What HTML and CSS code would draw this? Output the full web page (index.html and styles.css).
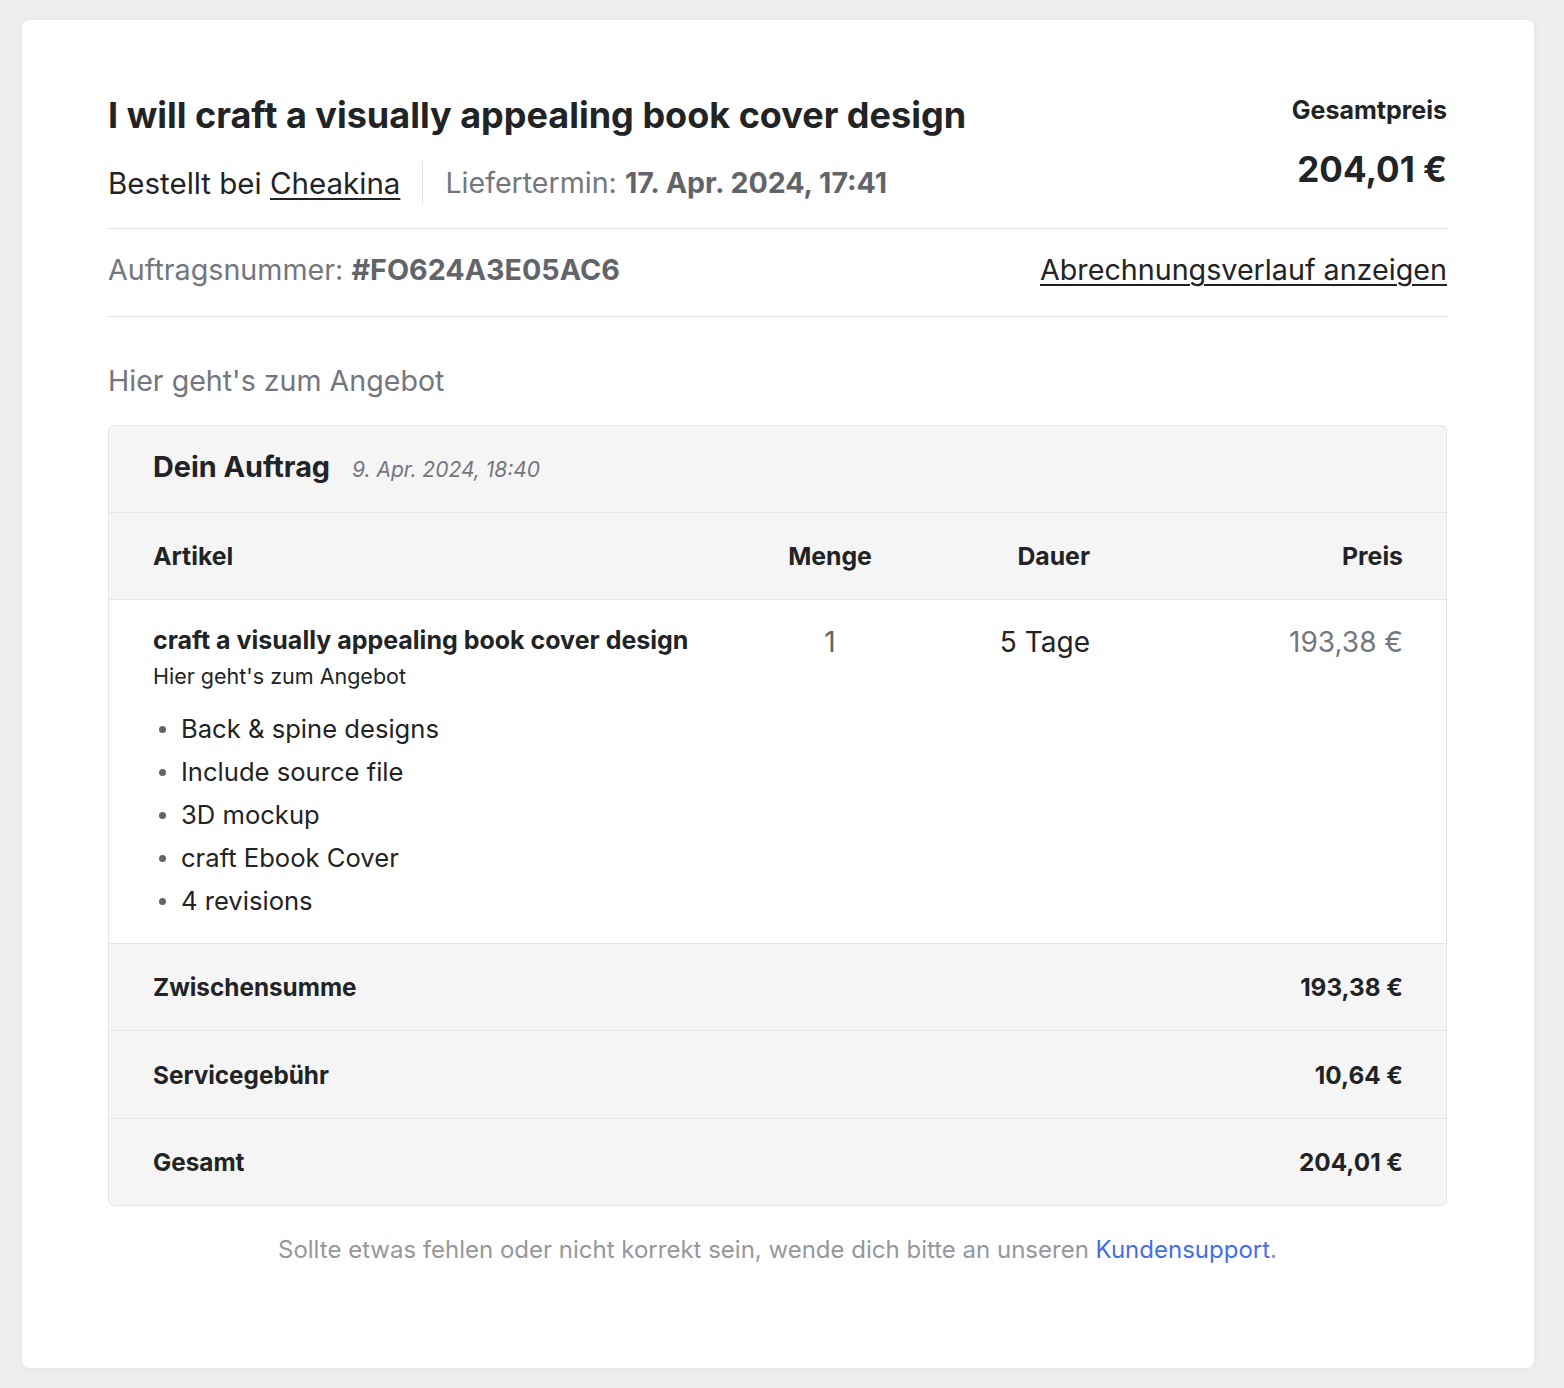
FILE: index.html
```html
<!DOCTYPE html>
<html lang="de">
<head>
<meta charset="utf-8">
<title>Auftrag</title>
<link rel="stylesheet" href="styles.css">
</head>
<body>
<main class="card">
  <header class="order-head">
    <div class="head-main">
      <h1 class="gig-title">I will craft a visually appealing book cover design</h1>
      <div class="meta">
        <span class="meta-seller">Bestellt bei <a class="seller-link" href="#">Cheakina</a></span>
        <span class="meta-sep"></span>
        <span class="meta-delivery">Liefertermin: <strong>17. Apr. 2024, 17:41</strong></span>
      </div>
    </div>
    <div class="head-total">
      <div class="total-label">Gesamtpreis</div>
      <div class="total-value">204,01 €</div>
    </div>
  </header>

  <div class="order-number-row">
    <span class="order-number">Auftragsnummer: <strong>#FO624A3E05AC6</strong></span>
    <a class="billing-link" href="#">Abrechnungsverlauf anzeigen</a>
  </div>

  <p class="offer-link">Hier geht's zum Angebot</p>

  <section class="order-box">
    <div class="box-head">
      <h2 class="box-title">Dein Auftrag</h2>
      <span class="box-date">9. Apr. 2024, 18:40</span>
    </div>

    <div class="grid-row col-head">
      <span>Artikel</span>
      <span class="c-center">Menge</span>
      <span class="c-right">Dauer</span>
      <span class="c-right">Preis</span>
    </div>

    <div class="grid-row item-row">
      <div class="item-info">
        <div class="item-title">craft a visually appealing book cover design</div>
        <div class="item-sub">Hier geht's zum Angebot</div>
        <ul class="item-features">
          <li>Back &amp; spine designs</li>
          <li>Include source file</li>
          <li>3D mockup</li>
          <li>craft Ebook Cover</li>
          <li>4 revisions</li>
        </ul>
      </div>
      <span class="item-val c-center qty">1</span>
      <span class="item-val c-right dur">5 Tage</span>
      <span class="item-val c-right price">193,38 €</span>
    </div>

    <div class="sum-row">
      <span>Zwischensumme</span>
      <span>193,38 €</span>
    </div>
    <div class="sum-row sum-row-mid">
      <span>Servicegebühr</span>
      <span>10,64 €</span>
    </div>
    <div class="sum-row">
      <span>Gesamt</span>
      <span>204,01 €</span>
    </div>
  </section>

  <p class="footnote">Sollte etwas fehlen oder nicht korrekt sein, wende dich bitte an unseren <a class="support-link" href="#">Kundensupport</a>.</p>
</main>
</body>
</html>
```

FILE: styles.css
```css
* { box-sizing: border-box; }

html, body {
  margin: 0;
  background: #efefef;
}

body {
  padding: 20px 22px;
  font-family: "Inter", "Noto Sans", sans-serif;
  color: #222325;
}

a { color: inherit; }

.card {
  width: 1512px;
  background: #ffffff;
  border-radius: 8px;
  box-shadow: 0 1px 14px rgba(0, 0, 0, 0.05);
  padding: 73px 87px 102px 86px;
}

/* ---------- head ---------- */
.order-head {
  display: flex;
  justify-content: space-between;
  align-items: flex-start;
  padding-bottom: 23px;
  border-bottom: 1px solid #e4e5e7;
}

.gig-title {
  margin: 0;
  font-size: 36px;
  line-height: 44px;
  font-weight: 700;
  color: #222325;
}

.meta {
  display: flex;
  align-items: stretch;
  gap: 22px;
  margin-top: 24px;
  line-height: 44px;
}

.meta-seller {
  font-size: 29.5px;
  color: #222325;
}

.seller-link {
  text-decoration: underline;
  text-underline-offset: 4px;
  text-decoration-thickness: 2px;
}

.meta-sep {
  width: 1px;
  background: #e4e5e7;
}

.meta-delivery {
  font-size: 28.6px;
  color: #74767e;
}

.meta-delivery strong { color: #62646a; font-weight: 700; }

.head-total {
  text-align: right;
}

.total-label {
  font-size: 25px;
  line-height: 34px;
  font-weight: 700;
  color: #222325;
}

.total-value {
  margin-top: 20px;
  font-size: 35px;
  line-height: 44px;
  font-weight: 700;
  color: #222325;
}

/* ---------- order number ---------- */
.order-number-row {
  display: flex;
  justify-content: space-between;
  align-items: center;
  padding: 21px 0 26px;
  border-bottom: 1px solid #e4e5e7;
  font-size: 28.7px;
  line-height: 40px;
}

.order-number { color: #74767e; }
.order-number strong { color: #62646a; font-weight: 700; }

.billing-link {
  color: #222325;
  text-decoration: underline;
  text-underline-offset: 4px;
  text-decoration-thickness: 2px;
}

.offer-link {
  margin: 44px 0 24px;
  font-size: 28.6px;
  line-height: 40px;
  color: #74767e;
}

/* ---------- order box ---------- */
.order-box {
  border: 1px solid #e4e5e7;
  border-radius: 6px;
  overflow: hidden;
  background: #f5f5f5;
}

.box-head {
  display: flex;
  align-items: baseline;
  gap: 22px;
  padding: 21px 44px 25px;
}

.box-title {
  margin: 0;
  font-size: 28.8px;
  line-height: 40px;
  font-weight: 700;
  color: #222325;
}

.box-date {
  font-size: 21px;
  font-style: italic;
  color: #74767e;
}

.grid-row {
  display: grid;
  grid-template-columns: 1fr 160px 180px 313px;
  padding: 0 43px 0 44px;
  border-top: 1px solid #e4e5e7;
}

.c-center { text-align: center; }
.c-right { text-align: right; }

.col-head {
  height: 87px;
  align-items: center;
  font-size: 24.8px;
  line-height: 30px;
  font-weight: 700;
  color: #222325;
}

.item-row {
  background: #ffffff;
  padding-top: 24px;
  padding-bottom: 21px;
  align-items: start;
}

.item-title {
  font-size: 25px;
  line-height: 32px;
  font-weight: 700;
  color: #222325;
}

.item-sub {
  margin-top: 7px;
  font-size: 21.5px;
  line-height: 26px;
  color: #222325;
}

.item-features {
  list-style: none;
  margin: 18px 0 0;
  padding: 0;
  font-size: 25.6px;
  line-height: 43px;
  color: #222325;
}

.item-features li {
  display: flex;
  align-items: center;
  gap: 15px;
  padding-left: 6px;
}

.item-features li::before {
  content: "";
  width: 7px;
  height: 7px;
  border-radius: 50%;
  background: #62646a;
  flex: none;
  margin-top: 2px;
}

.item-val {
  font-size: 28px;
  line-height: 36px;
}

.qty { color: #62646a; }
.dur { color: #222325; }
.price { color: #74767e; }

.sum-row {
  display: flex;
  justify-content: space-between;
  align-items: center;
  height: 87px;
  padding: 0 43px 0 44px;
  border-top: 1px solid #e4e5e7;
  font-size: 24.3px;
  font-weight: 700;
  color: #222325;
}

.sum-row-mid { height: 88px; }

/* ---------- footnote ---------- */
.footnote {
  margin: 28px 0 0;
  text-align: center;
  font-size: 24px;
  line-height: 32px;
  color: #95979d;
}

.support-link {
  color: #446ee7;
  text-decoration: none;
}
```
